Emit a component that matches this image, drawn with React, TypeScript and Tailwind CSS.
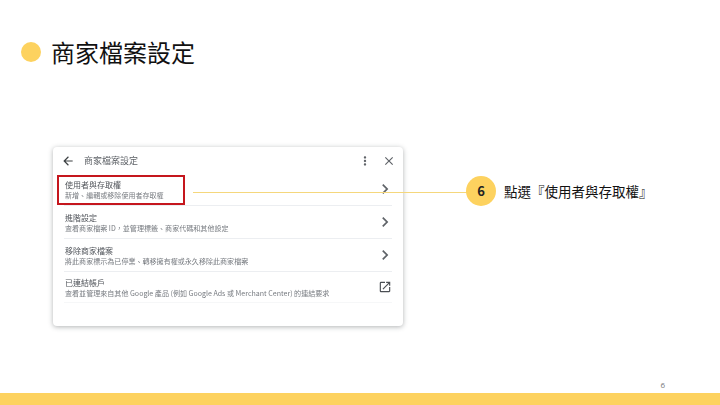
import React from "react";

const cjk = { fontFamily: '"Noto Sans CJK TC", "Noto Sans", sans-serif' };

const Mi = ({ d, className }: { d: string; className: string }) => (
  <svg viewBox="0 0 24 24" fill="currentColor" className={className}>
    <path d={d} />
  </svg>
);

const BACK = "M20 11H7.83l5.59-5.59L12 4l-8 8 8 8 1.41-1.41L7.83 13H20v-2z";
const MORE = "M12 8c1.1 0 2-.9 2-2s-.9-2-2-2-2 .9-2 2 .9 2 2 2zm0 2c-1.1 0-2 .9-2 2s.9 2 2 2 2-.9 2-2-.9-2-2-2zm0 6c-1.1 0-2 .9-2 2s.9 2 2 2 2-.9 2-2-.9-2-2-2z";
const CLOSE = "M19 6.41L17.59 5 12 10.59 6.41 5 5 6.41 10.59 12 5 17.59 6.41 19 12 13.41 17.59 19 19 17.59 13.41 12z";
const CHEV = "M10 6L8.59 7.41 13.17 12l-4.58 4.59L10 18l6-6z";
const OPEN = "M19 19H5V5h7V3H5a2 2 0 0 0-2 2v14a2 2 0 0 0 2 2h14c1.1 0 2-.9 2-2v-7h-2v7zM14 3v2h3.59l-9.83 9.83 1.41 1.41L19 6.41V10h2V3h-7z";

const rows = [
  { t: "使用者與存取權", s: "新增、編輯或移除使用者存取權" },
  { t: "進階設定", s: "查看商家檔案 ID，並管理標籤、商家代碼和其他設定" },
  { t: "移除商家檔案", s: "將此商家標示為已停業、轉移擁有權或永久移除此商家檔案" },
  { t: "已連結帳戶", s: "查看並管理來自其他 Google 產品 (例如 Google Ads 或 Merchant Center) 的連結要求" },
];

export default function App() {
  return (
    <div className="relative flex h-[405px] w-[720px] flex-col overflow-hidden bg-white" style={cjk}>
      <div className="flex items-center gap-[10px] pl-[21px] pt-[34px]">
        <div className="h-5 w-5 rounded-full bg-[#fdd25f]" />
        <div className="text-[24px] leading-[36px] text-[#111]">商家檔案設定</div>
      </div>

      <div className="relative ml-[53px] mt-[77px] h-[179px] w-[350px] rounded-[4px] bg-white shadow-[0_1px_5px_rgba(60,64,67,0.4)]">
        <div className="blur-[0.35px] px-[11px]">
          <div className="flex h-[26px] items-center pt-[2px] text-[#5f6368]">
            <Mi d={BACK} className="ml-[-3px] mr-[1px] h-[14px] w-[14px] text-[#3c4043]" />
            <span className="ml-[8px] text-[9px] text-[#5f6368]">商家檔案設定</span>
            <Mi d={MORE} className="ml-auto mr-[10px] h-[14px] w-[14px] text-[#5f6368]" />
            <Mi d={CLOSE} className="mr-[-4px] h-[14px] w-[14px] text-[#5f6368]" />
          </div>
          <div className="flex flex-col">
            {rows.map((r, i) => (
              <div
                key={r.t}
                className="flex h-[33px] items-center justify-between border-b border-[#eceef1] pl-[1px] last:h-[31px] last:border-[#f6f7f8]"
              >
                <div className="flex flex-col">
                  <span className="text-[8px] leading-[11px] text-[#50545a]">{r.t}</span>
                  <span className="text-[7.05px] leading-[10px] text-[#777b80]">{r.s}</span>
                </div>
                {i < 3 ? (
                  <Mi d={CHEV} className="mr-[-3px] h-[20px] w-[20px] text-[#5f6368]" />
                ) : (
                  <Mi d={OPEN} className="mr-[0px] h-[14px] w-[14px] text-[#4b4f54]" />
                )}
              </div>
            ))}
          </div>
        </div>
        <div className="absolute left-[4px] top-[28px] h-[30px] w-[128px] border-2 border-[#c5161d]" />
      </div>

      <div className="absolute left-[193px] top-[192px] h-px w-[274px] bg-[#f5d77c]" />
      <div className="absolute left-[466px] top-[176px] flex items-center gap-[8px]">
        <div className="flex h-[30px] w-[30px] items-center justify-center rounded-full bg-[#fdd25f] text-[13px] font-bold text-[#222]">
          6
        </div>
        <span className="text-[13.5px] text-[#111]">點選『使用者與存取權』</span>
      </div>

      <div className="mt-auto flex h-[14px] items-start justify-end pr-[55px] text-[8px] leading-[12px] text-[#777]" style={{ fontFamily: '"Open Sans", sans-serif' }}>
        6
      </div>
      <div className="h-[12px] bg-[#fdd25f]" />
    </div>
  );
}
